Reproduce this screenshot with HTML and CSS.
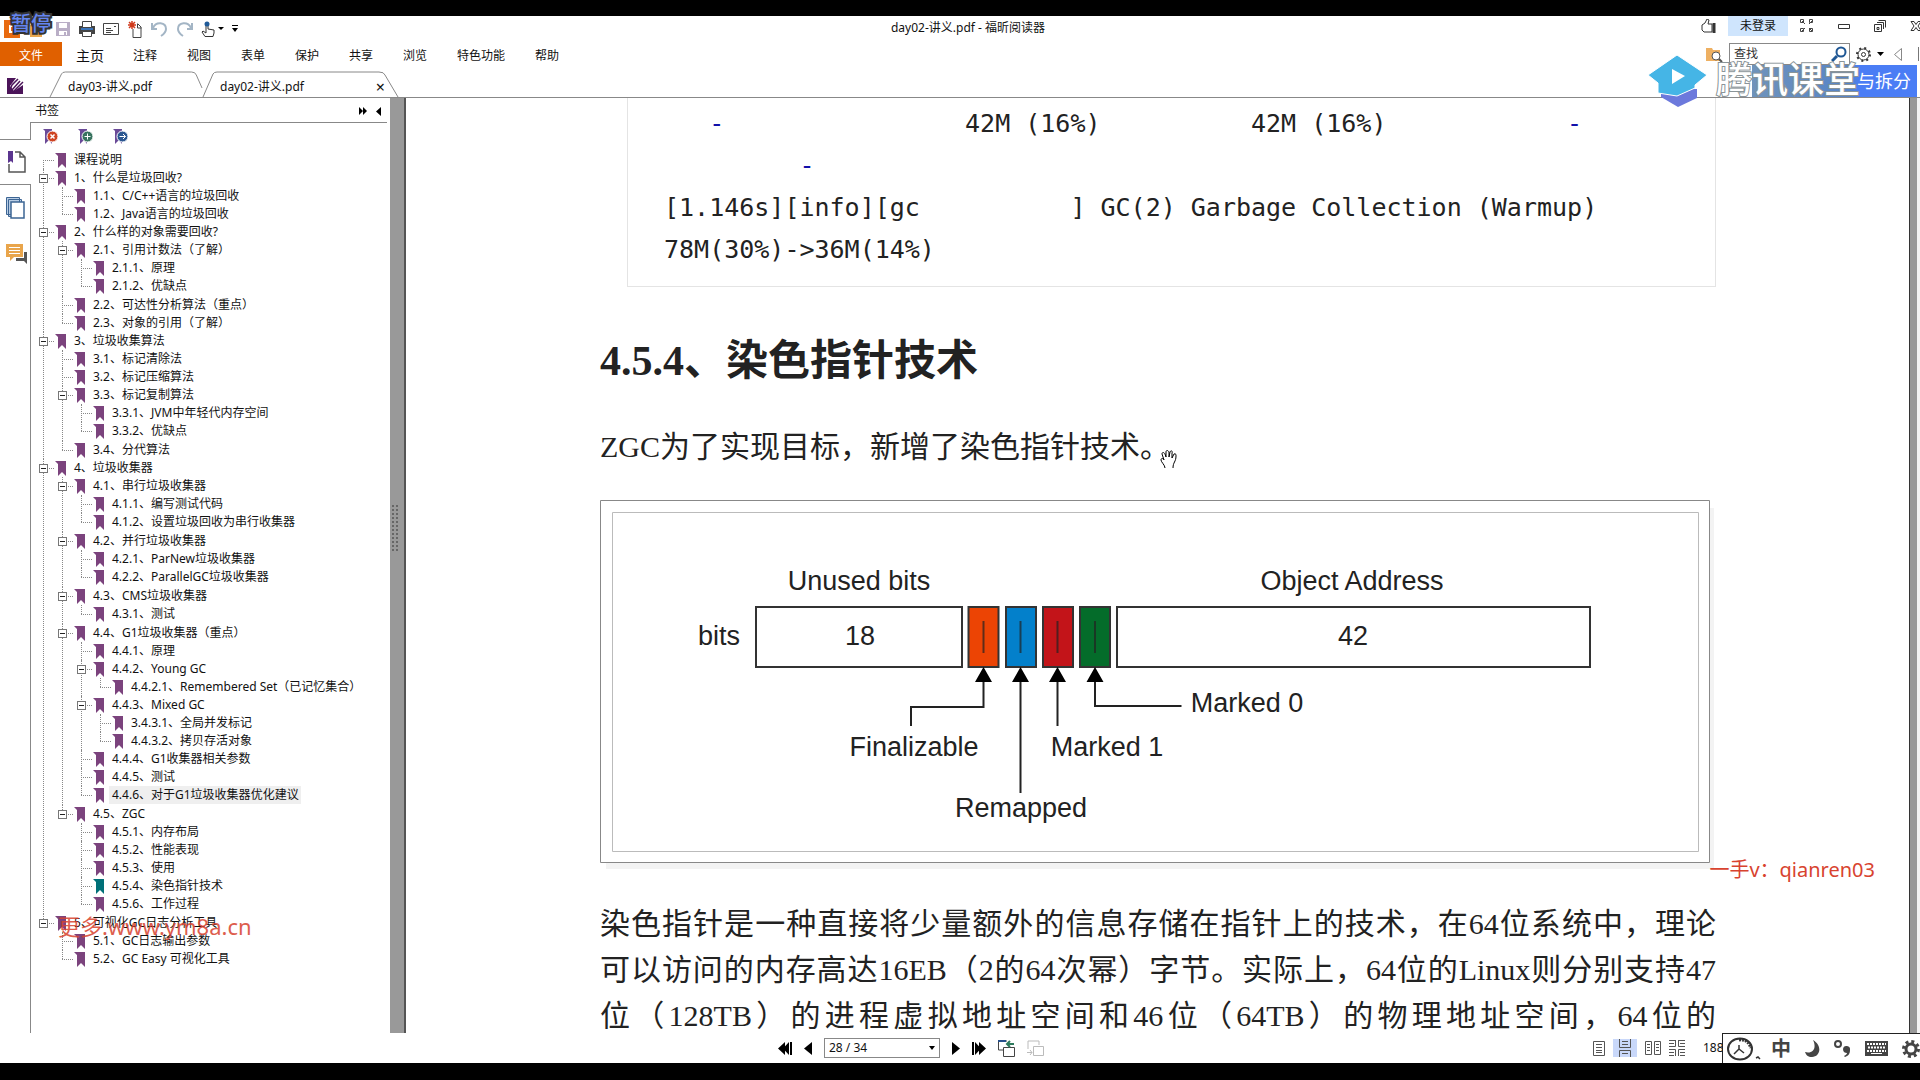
FILE: index.html
```html
<!DOCTYPE html>
<html lang="zh-CN">
<head>
    <meta charset="UTF-8">
    <title>day02-讲义.pdf - 福昕阅读器</title>
    <link rel="stylesheet" href="styles.css">
</head>
<body>
    <svg class="defs" width="0" height="0">
        <symbol id="bm" viewBox="0 0 11 15"><path d="M0 0h11v15l-4-4-4 4V3z"/></symbol>
    </svg>

    <!-- 标题栏 -->
    <header class="titlebar">
        <div class="quick">
            <svg class="logo" width="38" height="18" viewBox="0 0 38 18"><path fill="#e86a10" d="M0 0h16v18H0z"/><path d="M11 6H6v6h5" fill="none" stroke="#fff" stroke-width="2"/><path fill="#e9a850" d="M26 5h12v12H26z"/></svg>
            <svg width="15" height="16" viewBox="0 0 15 16"><path fill="#b9aec6" d="M0 1h14v14H0z"/><path fill="#fff" d="M3 2h8v5H3zM3 10h8v4H3z"/><path fill="#b9aec6" d="M8 11h2v3H8z"/></svg>
            <svg width="16" height="16" viewBox="0 0 16 16"><path fill="#444" d="M0 5h16v8H0z"/><path fill="#fff" stroke="#444" d="M3.500.5h9v6h-9zM3.500 10.500h9v5h-9z"/><path fill="#3a73b8" d="M2 7h12v2H2z"/></svg>
            <svg width="17" height="14" viewBox="0 0 17 14" fill="none" stroke="#444"><path d="M.5 1.500h15v11H.5zM3 6.500h5M3 8.500h7M3 10.500h5M11 4.500h2"/></svg>
            <svg width="15" height="17" viewBox="0 0 15 17" fill="none"><path stroke="#444" d="M5 8v8.500h8V6l-3-3H9M9.500 3v4h4"/><path stroke="#d03a1c" stroke-width="1.500" d="M4 0v8M0 4h8M1 1l6 6M7 1L1 7"/></svg>
            <svg width="17" height="16" viewBox="0 0 17 16" fill="none" stroke="#a3b5c5" stroke-width="2"><path d="M2 7c3-7 13-6 13 1 0 3-2 5-5 7M1 2v6h5"/></svg>
            <svg width="17" height="16" viewBox="0 0 17 16" fill="none" stroke="#a3b5c5" stroke-width="2"><path d="M15 7C12 0 2 1 2 8c0 3 2 5 5 7M16 2v6h-5"/></svg>
            <svg class="point" width="25" height="17" viewBox="0 0 25 17"><path fill="#fff" stroke="#333" d="M4 15.500L1 11l1-1 3 2V2h2v6l6 1v3l-1 3.500z"/><circle cx="6" cy="3" r="2.500" fill="#205a98"/><path d="M17 6h6l-3 3z"/></svg>
            <svg class="more" width="6" height="8" viewBox="0 0 6 8"><path d="M0 0h6v1H0zM0 3h6L3 7z"/></svg>
        </div>
        <div class="title">day02-讲义.pdf - 福昕阅读器</div>
        <div class="account">
            <svg width="15" height="15" viewBox="0 0 15 15" fill="none" stroke="#333"><path d="M1 6l3-2 2-4 2 1-1 4h4v8H3l-2-2z"/><path stroke-width="3" d="M13 4v10"/></svg>
            <button class="login">未登录</button>
            <svg width="14" height="14" viewBox="0 0 14 14" fill="none" stroke="#444"><path d="M.5.5h3v3h-3zM9.500.5h3v3h-3zM.5 9.500h3v3h-3zM9.500 9.500h3v3h-3zM2 2l3 3M12 2L9 5M2 12l3-3M12 12L9 9"/></svg>
            <svg width="12" height="5" viewBox="0 0 12 5" fill="none" stroke="#333"><path d="M.5.5h11v4H.5z"/></svg>
            <svg width="12" height="12" viewBox="0 0 12 12" fill="none" stroke="#333"><path d="M.5 4.500h7v7h-7zM3 2.500h6.500V9M4.500.5h7v7M3 7.500h2v2H3z"/></svg>
            <svg width="12" height="10" viewBox="0 0 12 10" fill="none" stroke="#333"><path d="M1 .5h3l2 3 2-3h3L8 5l3 4.500H8L6 6.500 4 9.500H1L4 5z"/></svg>
        </div>
    </header>

    <!-- 菜单 -->
    <nav class="menu">
        <button class="file">文件</button>
        <button class="home">主页</button>
        <button>注释</button>
        <button>视图</button>
        <button>表单</button>
        <button>保护</button>
        <button>共享</button>
        <button>浏览</button>
        <button>特色功能</button>
        <button>帮助</button>
        <div class="find">
            <svg width="17" height="15" viewBox="0 0 17 15"><path fill="#eeb062" d="M0 1h6l1 2h7v11H0z"/><circle cx="10" cy="9" r="4" fill="#fff" stroke="#555"/><path stroke="#555" stroke-width="2" d="M13 12l3 3"/></svg>
            <label class="findbox">
                <input type="text" placeholder="查找" aria-label="查找">
                <svg width="16" height="16" viewBox="0 0 16 16" fill="none" stroke="#1f5794"><circle cx="10" cy="6" r="4.500" stroke-width="2"/><path stroke-width="3" d="M6 10l-5 5"/></svg>
            </label>
            <svg width="15" height="15" viewBox="0 0 15 15" fill="none" stroke="#333"><circle cx="7.500" cy="7.500" r="5.500"/><circle cx="7.500" cy="7.500" r="2"/><circle cx="7.500" cy="7.500" r="6.500" stroke-width="2" stroke-dasharray="2 3.100"/></svg>
            <svg width="7" height="4" viewBox="0 0 7 4"><path d="M0 0h7L3.500 4z"/></svg>
            <svg class="prev" width="8" height="13" viewBox="0 0 8 13" fill="none" stroke="#888"><path d="M7.500.5v12L.5 6.500z"/></svg>
            <svg width="2" height="14"><path fill="#777" d="M0 0h1v14H0z"/></svg>
        </div>
    </nav>

    <!-- 文档标签 -->
    <div class="tabs">
        <svg class="pen" width="17" height="16" viewBox="0 0 17 16"><path fill="#4b1459" d="M0 0h9L3 8l4 5 9-6v9H0z"/><path fill="none" stroke="#4b1459" stroke-width="1.500" d="M3 12l2-5 6-6M5 12l8-9M7 13l9-9"/></svg>
        <button class="tab">
            <svg viewBox="0 0 160 26" preserveAspectRatio="none"><path d="M0 26L12 3q1-2 4-2h132q4 0 5 3l6 13"/></svg>
            <span>day03-讲义.pdf</span>
        </button>
        <button class="tab wide">
            <svg viewBox="0 0 195 26" preserveAspectRatio="none"><path d="M0 26L10 3q1-2 4-2h162q5 0 6 3l13 22"/></svg>
            <span>day02-讲义.pdf</span>
            <b>×</b>
        </button>
    </div>

    <main class="main">
        <div class="rail">
            <div class="rail-head"></div>
            <div class="rail-gap"></div>
            <div class="rail-on">
                <svg width="18" height="22" viewBox="0 0 18 22"><path fill="none" stroke="#555" stroke-width="1.500" d="M7 1h5l5 5v15H1V13M12 1v5h5"/><path fill="#5b358f" d="M0 0h5v12l-2-2-3 2z"/></svg>
            </div>
            <div class="rail-rest">
                <svg width="19" height="22" viewBox="0 0 19 22" fill="#fff" stroke="#3c6594"><path fill="#b9cde4" d="M.5.500h13v17H.5zM2.500 2.500h13v17h-13z"/><path d="M5 5h13v16H5z" stroke-width="1.500"/></svg>
                <svg width="22" height="21" viewBox="0 0 22 21"><path fill="#e9a54b" d="M0 0h17v13H8l-4 4v-4H0z"/><path stroke="#fff" d="M3 3.500h11M3 6.500h11M3 9.500h11"/><path fill="#555" d="M18 8h3v12l-3-3h-8v-3h8z"/></svg>
            </div>
        </div>

        <aside class="side">
            <div class="side-head">
                <span>书签</span>
                <svg width="24" height="9" viewBox="0 0 24 9"><path d="M0 0l4 4-4 4zM4 0l4 4-4 4zM22 0v9l-5-4.500z"/></svg>
            </div>
            <div class="side-tools">
                <svg width="15" height="16" viewBox="0 0 15 16"><path fill="#6a4a97" d="M0 0h9v15l-3-4-4 4V2z"/><circle cx="9.500" cy="7.500" r="5.500" fill="#cf4422" stroke="#fff"/><path stroke="#fff" stroke-width="1.500" d="M7.500 5.500l4 4M11.500 5.500l-4 4"/></svg>
                <svg width="15" height="16" viewBox="0 0 15 16"><path fill="#6a4a97" d="M0 0h9v15l-3-4-4 4V2z"/><circle cx="9.500" cy="7.500" r="5.500" fill="#38735f" stroke="#fff"/><path stroke="#fff" d="M9.500 4.500v6M6.500 7.500h6"/></svg>
                <svg width="15" height="16" viewBox="0 0 15 16"><path fill="#6a4a97" d="M0 0h9v15l-3-4-4 4V2z"/><circle cx="9.500" cy="7.500" r="5.500" fill="#2b5791" stroke="#fff"/><path stroke="#fff" fill="none" d="M6.500 7.500h6M10 5l2.500 2.500L10 10"/></svg>
            </div>
            <ul class="tree">
                <li><div class="node"><svg><use href="#bm"/></svg><a href="#">课程说明</a></div></li>
                <li><div class="node"><button class="fold"></button><svg><use href="#bm"/></svg><a href="#">1、什么是垃圾回收?</a></div>
                    <ul>
                        <li><div class="node"><svg><use href="#bm"/></svg><a href="#">1.1、C/C++语言的垃圾回收</a></div></li>
                        <li><div class="node"><svg><use href="#bm"/></svg><a href="#">1.2、Java语言的垃圾回收</a></div></li>
                    </ul>
                </li>
                <li><div class="node"><button class="fold"></button><svg><use href="#bm"/></svg><a href="#">2、什么样的对象需要回收?</a></div>
                    <ul>
                        <li><div class="node"><button class="fold"></button><svg><use href="#bm"/></svg><a href="#">2.1、引用计数法（了解）</a></div>
                            <ul>
                                <li><div class="node"><svg><use href="#bm"/></svg><a href="#">2.1.1、原理</a></div></li>
                                <li><div class="node"><svg><use href="#bm"/></svg><a href="#">2.1.2、优缺点</a></div></li>
                            </ul>
                        </li>
                        <li><div class="node"><svg><use href="#bm"/></svg><a href="#">2.2、可达性分析算法（重点）</a></div></li>
                        <li><div class="node"><svg><use href="#bm"/></svg><a href="#">2.3、对象的引用（了解）</a></div></li>
                    </ul>
                </li>
                <li><div class="node"><button class="fold"></button><svg><use href="#bm"/></svg><a href="#">3、垃圾收集算法</a></div>
                    <ul>
                        <li><div class="node"><svg><use href="#bm"/></svg><a href="#">3.1、标记清除法</a></div></li>
                        <li><div class="node"><svg><use href="#bm"/></svg><a href="#">3.2、标记压缩算法</a></div></li>
                        <li><div class="node"><button class="fold"></button><svg><use href="#bm"/></svg><a href="#">3.3、标记复制算法</a></div>
                            <ul>
                                <li><div class="node"><svg><use href="#bm"/></svg><a href="#">3.3.1、JVM中年轻代内存空间</a></div></li>
                                <li><div class="node"><svg><use href="#bm"/></svg><a href="#">3.3.2、优缺点</a></div></li>
                            </ul>
                        </li>
                        <li><div class="node"><svg><use href="#bm"/></svg><a href="#">3.4、分代算法</a></div></li>
                    </ul>
                </li>
                <li><div class="node"><button class="fold"></button><svg><use href="#bm"/></svg><a href="#">4、垃圾收集器</a></div>
                    <ul>
                        <li><div class="node"><button class="fold"></button><svg><use href="#bm"/></svg><a href="#">4.1、串行垃圾收集器</a></div>
                            <ul>
                                <li><div class="node"><svg><use href="#bm"/></svg><a href="#">4.1.1、编写测试代码</a></div></li>
                                <li><div class="node"><svg><use href="#bm"/></svg><a href="#">4.1.2、设置垃圾回收为串行收集器</a></div></li>
                            </ul>
                        </li>
                        <li><div class="node"><button class="fold"></button><svg><use href="#bm"/></svg><a href="#">4.2、并行垃圾收集器</a></div>
                            <ul>
                                <li><div class="node"><svg><use href="#bm"/></svg><a href="#">4.2.1、ParNew垃圾收集器</a></div></li>
                                <li><div class="node"><svg><use href="#bm"/></svg><a href="#">4.2.2、ParallelGC垃圾收集器</a></div></li>
                            </ul>
                        </li>
                        <li><div class="node"><button class="fold"></button><svg><use href="#bm"/></svg><a href="#">4.3、CMS垃圾收集器</a></div>
                            <ul>
                                <li><div class="node"><svg><use href="#bm"/></svg><a href="#">4.3.1、测试</a></div></li>
                            </ul>
                        </li>
                        <li><div class="node"><button class="fold"></button><svg><use href="#bm"/></svg><a href="#">4.4、G1垃圾收集器（重点）</a></div>
                            <ul>
                                <li><div class="node"><svg><use href="#bm"/></svg><a href="#">4.4.1、原理</a></div></li>
                                <li><div class="node"><button class="fold"></button><svg><use href="#bm"/></svg><a href="#">4.4.2、Young GC</a></div>
                                    <ul>
                                        <li><div class="node"><svg><use href="#bm"/></svg><a href="#">4.4.2.1、Remembered Set（已记忆集合）</a></div></li>
                                    </ul>
                                </li>
                                <li><div class="node"><button class="fold"></button><svg><use href="#bm"/></svg><a href="#">4.4.3、Mixed GC</a></div>
                                    <ul>
                                        <li><div class="node"><svg><use href="#bm"/></svg><a href="#">3.4.3.1、全局并发标记</a></div></li>
                                        <li><div class="node"><svg><use href="#bm"/></svg><a href="#">4.4.3.2、拷贝存活对象</a></div></li>
                                    </ul>
                                </li>
                                <li><div class="node"><svg><use href="#bm"/></svg><a href="#">4.4.4、G1收集器相关参数</a></div></li>
                                <li><div class="node"><svg><use href="#bm"/></svg><a href="#">4.4.5、测试</a></div></li>
                                <li><div class="node selected"><svg><use href="#bm"/></svg><a href="#">4.4.6、对于G1垃圾收集器优化建议</a></div></li>
                            </ul>
                        </li>
                        <li><div class="node"><button class="fold"></button><svg><use href="#bm"/></svg><a href="#">4.5、ZGC</a></div>
                            <ul>
                                <li><div class="node"><svg><use href="#bm"/></svg><a href="#">4.5.1、内存布局</a></div></li>
                                <li><div class="node"><svg><use href="#bm"/></svg><a href="#">4.5.2、性能表现</a></div></li>
                                <li><div class="node"><svg><use href="#bm"/></svg><a href="#">4.5.3、使用</a></div></li>
                                <li><div class="node current"><svg><use href="#bm"/></svg><a href="#">4.5.4、染色指针技术</a></div></li>
                                <li><div class="node"><svg><use href="#bm"/></svg><a href="#">4.5.6、工作过程</a></div></li>
                            </ul>
                        </li>
                    </ul>
                </li>
                <li><div class="node"><button class="fold"></button><svg><use href="#bm"/></svg><a href="#">5、可视化GC日志分析工具</a></div>
                    <ul>
                        <li><div class="node"><svg><use href="#bm"/></svg><a href="#">5.1、GC日志输出参数</a></div></li>
                        <li><div class="node"><svg><use href="#bm"/></svg><a href="#">5.2、GC Easy 可视化工具</a></div></li>
                    </ul>
                </li>
            </ul>
            <div class="mark mark-side">更多.www.ym8a.cn</div>
        </aside>
        <div class="splitter"><i></i></div>

        <article class="doc">
<pre class="code">   <em>-</em>                42M (16%)          42M (16%)            <em>-</em>
         <em>-</em>
[1.146s][info][gc          ] GC(2) Garbage Collection (Warmup)
78M(30%)-&gt;36M(14%)</pre>
            <h2>4.5.4、染色指针技术</h2>
            <p class="lead">ZGC为了实现目标，新增了染色指针技术。<svg class="hand" width="17" height="19" viewBox="0 0 17 19"><path fill="#fff" stroke="#000" d="M5 18c0-3-4-6-4-8s2-2 3 0L2 4c0-2 2-2 3 0l1 3V2c0-2 2-2 3 0v5l1-5c1-2 3-1 2 1v5l2-4c2-1 2 1 2 2 0 6-3 6-3 12"/></svg></p>
            <figure>
                <svg viewBox="0 0 1110 363">
                    <path class="frame outer" d="M.5.5h1109v362H.5z"/>
                    <path class="frame" d="M12.500 12.500h1086v339h-1086z"/>
                    <g class="cells">
                        <path d="M156 107h206v60H156zM517 107h473v60H517z"/>
                        <path fill="#ec4404" d="M368.500 107h30v60h-30z"/>
                        <path fill="#0380cb" d="M406 107h30v60h-30z"/>
                        <path fill="#c31419" d="M443 107h30v60h-30z"/>
                        <path fill="#046c2a" d="M480 107h30v60h-30z"/>
                    </g>
                    <path class="line thin" d="M383.500 121v32M420.500 121v32M457.500 121v32M495 121v32"/>
                    <path class="line" d="M383.500 180v27h-72.500v19M420.500 180v113M457.500 180v46M495 180v26h86.500"/>
                    <path d="M383.500 167l8.500 15h-17zM420.500 167l8.500 15h-17zM457.500 167l8.500 15h-17zM495 167l8.500 15h-17z"/>
                    <g class="labels">
                        <text x="259" y="90">Unused bits</text>
                        <text x="752" y="90">Object Address</text>
                        <text x="119" y="145">bits</text>
                        <text x="260" y="145">18</text>
                        <text x="753" y="145">42</text>
                        <text x="647" y="212">Marked 0</text>
                        <text x="314" y="256">Finalizable</text>
                        <text x="507" y="256">Marked 1</text>
                        <text x="421" y="317">Remapped</text>
                    </g>
                </svg>
            </figure>
            <p class="body">染色指针是一种直接将少量额外的信息存储在指针上的技术，在64位系统中，理论<br>可以访问的内存高达16EB（2的64次幂）字节。实际上，64位的Linux则分别支持47<br>位（128TB）的进程虚拟地址空间和46位（64TB）的物理地址空间，64位的</p>
            <div class="mark mark-doc">一手v：qianren03</div>
        </article>
        <div class="scroll"></div>
    </main>

    <!-- 状态栏 -->
    <footer class="status">
        <div class="pager">
            <svg width="14" height="13" viewBox="0 0 14 13"><path d="M7 0v13L0 6.500zM11 0v13L5 6.500zM12 0h2v13h-2z"/></svg>
            <svg width="8" height="13" viewBox="0 0 8 13"><path d="M8 0v13L0 6.500z"/></svg>
            <div class="pagebox">
                <select aria-label="页码"><option>28 / 34</option></select>
                <svg width="6" height="4" viewBox="0 0 6 4"><path d="M0 0h6L3 4z"/></svg>
            </div>
            <svg width="8" height="13" viewBox="0 0 8 13"><path d="M0 0l8 6.500L0 13z"/></svg>
            <svg width="14" height="13" viewBox="0 0 14 13"><path d="M0 0h2v13H0zM3 0l6 6.500L3 13zM7 0l7 6.500L7 13z"/></svg>
            <svg width="17" height="17" viewBox="0 0 17 17" fill="none" stroke="#444"><path d="M5 10H.5V1H9M5.500 7.500h11v9h-11z"/><path stroke="#27508c" stroke-width="2" d="M0 1h8"/><path stroke="#2d7a5c" stroke-width="2" d="M9 4h7M12 1L9 4l3 3"/></svg>
            <svg width="17" height="17" viewBox="0 0 17 17" fill="none" stroke="#bbb"><path d="M1 9V1h11v4M6.500 6.500h10v9h-10zM0 12.500h5M3 10l2 2.500L3 15"/></svg>
        </div>
        <div class="views">
            <svg width="12" height="15" viewBox="0 0 12 15"><path d="M.5.5h11v14H.5zM3 3.500h6M3 6.500h6M3 9.500h6M3 11.500h6"/></svg>
            <svg class="on" width="24" height="18" viewBox="0 0 24 18"><path d="M6.500 0v8.500h11V0M6.500 18v-6.500h11V18M9 2.500h6M9 5.500h6M9 14.500h6"/></svg>
            <svg width="16" height="15" viewBox="0 0 16 15"><path d="M.5.5h6v13h-6zM9.500.5h6v13h-6zM2 3.500h3M2 6.500h3M2 9.500h3M11 3.500h3M11 6.500h3M11 9.500h3"/></svg>
            <svg width="16" height="16" viewBox="0 0 16 16"><path d="M0 .5h6M0 3.500h5M0 6.500h6.500V0M16 6.500H9.500V0M10 .5h6M11 3.500h5M0 9.500h6.500V16M16 9.500H9.500V16M0 12.500h5M11 12.500h5M0 15.500h5M11 15.500h5"/></svg>
            <span>188</span>
        </div>
        <div class="ime">
            <svg width="34" height="24" viewBox="0 0 34 24" fill="none" stroke="#333"><ellipse cx="13" cy="12" rx="12" ry="10.500" stroke-width="2"/><path stroke-width="3" d="M12 3c7-1 10 3 12 8" stroke-dasharray="2 1"/><path stroke-width="1.500" d="M12 8v4l-5 5M12 12l5 4M29 21l2-1 2 2"/></svg>
            <b>中</b>
            <svg width="15" height="17" viewBox="0 0 15 17" fill="#444"><path d="M8 0c10 6 7 17-1 17-4 0-6-2-7-5 8 2 12-4 8-12z"/></svg>
            <svg width="17" height="17" viewBox="0 0 17 17"><circle cx="4" cy="4" r="3" fill="none" stroke="#444" stroke-width="2"/><path fill="#444" d="M9 9a3.500 3.500 0 1 1 7 1c0 4-2 6-5 7l-1-1c2-1 3-2 3-3-2 0-4-1-4-4z"/></svg>
            <svg width="23" height="15" viewBox="0 0 23 15"><path fill="#444" d="M0 0h23v15H0z"/><path stroke="#fff" stroke-width="2" stroke-dasharray="2 1" d="M2 3h19M3 6.500h18M2 10h19"/><path stroke="#fff" stroke-width="1" d="M6 12.500h11"/></svg>
            <svg width="18" height="18" viewBox="0 0 18 18" fill="none" stroke="#444"><circle cx="9" cy="9" r="5" stroke-width="3"/><circle cx="9" cy="9" r="7.500" stroke-width="3" stroke-dasharray="3 2.900"/></svg>
        </div>
    </footer>

    <!-- 视频水印 -->
    <div class="pause">暂停</div>
    <div class="ribbon">与拆分</div>
    <div class="brand">
        <svg width="59" height="52" viewBox="0 0 59 52"><path fill="#6c79dc" d="M13 34h36v9L30 52 13 42z"/><path fill="#45b5e6" stroke="#fff" d="M29 0l30 20-12 10v3L29 41 10 38V28L0 20z"/><path fill="#fff" d="M24 14l13 7-13 8z"/></svg>
        <span>腾讯课堂</span>
    </div>
</body>
</html>
```
FILE: styles.css
```css
*{
    box-sizing:border-box;
}
body{
    margin:0;
    height:100vh;
    padding:16px 0 17px;
    display:flex;
    flex-direction:column;
    position:relative;
    overflow:hidden;
    background:#000;
    color:#111;
    font:12px/18px "Noto Sans","Noto Sans CJK SC",sans-serif;
}
button,input,select{
    font:inherit;
    color:inherit;
    border:0;
    padding:0;
    background:none;
}
svg{
    flex:none;
}
.defs{
    position:absolute;
}
/* 标题栏 */
.titlebar{
    height:26px;
    display:grid;
    grid-template-columns:1fr auto 1fr;
    background:#fff;
}
.quick,.account{
    display:flex;
    align-items:center;
}
.quick{
    gap:8px;
    padding-left:4px;
}
.quick .logo{
    margin-right:6px;
}
.quick .more{
    margin-left:-2px;
}
.title{
    margin-left:16px;
    line-height:24px;
}
.account{
    justify-content:flex-end;
    gap:24px;
    margin-right:-2px;
    padding-bottom:6px;
}
.login{
    height:20px;
    padding:0 12px;
    margin:0 -12px;
    background:#cfe5fd;
}
/* 菜单 */
.menu{
    height:24px;
    display:flex;
    align-items:center;
    gap:30px;
    background:#fff;
}
.menu button{
    padding-top:4px;
}
.menu .file{
    width:62px;
    height:24px;
    margin-right:-16px;
    background:#e06000;
    color:#fff;
}
.menu .home{
    margin-right:-1px;
    font-size:14px;
}
.find{
    display:flex;
    align-items:center;
    gap:6px;
    margin-left:auto;
}
.findbox{
    width:121px;
    height:22px;
    display:flex;
    align-items:center;
    padding:0 2px 0 4px;
    border:1px solid #888;
}
.findbox input{
    flex:1;
    min-width:0;
    outline:none;
}
.findbox input::placeholder{
    color:#333;
    opacity:1;
}
.find .prev{
    margin:0 10px 0 4px;
}
/* 文档标签 */
.tabs{
    height:32px;
    display:flex;
    align-items:flex-end;
    padding-left:7px;
    background:#fff;
    border-bottom:1px solid #888;
}
.pen{
    margin:0 26px 3px 0;
}
.tab{
    position:relative;
    width:153px;
    height:26px;
    padding:6px 13px 0 18px;
    display:flex;
    align-items:center;
    justify-content:space-between;
    font-size:12px;
}
.tab.wide{
    width:195px;
    padding-left:17px;
}
.tab svg{
    position:absolute;
    left:0;
    top:0;
    width:100%;
    height:26px;
    fill:none;
    stroke:#888;
    overflow:visible;
}
.tab b{
    font-size:16px;
    font-weight:400;
}
/* 主体 */
.main{
    flex:1;
    min-height:0;
    display:flex;
    background:#fff;
}
.rail{
    width:31px;
    display:flex;
    flex-direction:column;
}
.rail-head{
    height:24px;
}
.rail-gap{
    height:18px;
    border:solid #888;
    border-width:0 1px 1px 0;
}
.rail-on{
    height:44px;
    padding:11px 0 0 8px;
}
.rail-rest{
    flex:1;
    display:flex;
    flex-direction:column;
    gap:25px;
    padding:12px 0 0 6px;
    border:solid #888;
    border-width:1px 1px 0 0;
}
.side{
    position:relative;
    width:359px;
    padding-right:3px;
}
.side-head{
    height:25px;
    display:flex;
    align-items:center;
    justify-content:space-between;
    padding:2px 4px 0;
    border-bottom:1px solid #888;
}
.side-tools{
    height:28px;
    display:flex;
    align-items:center;
    gap:20px;
    padding:0 12px;
}
.tree,.tree ul{
    margin:0;
    padding:0;
    list-style:none;
}
.tree ul{
    padding-left:19px;
}
.tree ul ul{
    padding-bottom:1px;
}
.tree ul ul ul{
    padding-bottom:0;
}
.tree li{
    position:relative;
}
/* 虚线 */
.tree li::before{
    content:"";
    position:absolute;
    left:12px;
    top:0;
    bottom:0;
    border-left:1px dotted #888;
}
.tree > li:first-child::before{
    top:9px;
}
.tree li:last-child::before{
    bottom:auto;
    height:9px;
}
.node{
    position:relative;
    height:18px;
    display:flex;
    align-items:center;
    padding-left:8px;
}
.node::before{
    content:"";
    position:absolute;
    left:12px;
    top:9px;
    width:11px;
    border-top:1px dotted #888;
}
.fold{
    position:relative;
    width:9px;
    height:9px;
    border:1px solid #777;
    background:linear-gradient(#222,#222) center/5px 1px no-repeat #fff;
}
.node svg{
    width:11px;
    height:15px;
    margin:0 5px 0 7px;
    fill:#7b437d;
}
.node svg:first-child{
    margin-left:16px;
}
.node a{
    padding:0 2px 0 3px;
    color:#111;
    text-decoration:none;
    white-space:nowrap;
}
.node.selected a{
    background:#efefef;
}
.node.current svg{
    fill:#007078;
}
.splitter{
    width:16px;
    display:flex;
    align-items:center;
    background:#999;
    border-right:2px solid #555;
}
.splitter i{
    width:6px;
    height:46px;
    margin:0 0 76px 2px;
    border:dotted #666;
    border-width:0 2px;
}
/* 文档 */
.doc{
    flex:1;
    min-width:0;
    position:relative;
    overflow:hidden;
    padding:0 193px 0 194px;
    color:#222;
}
.code{
    margin:0 0 0 27px;
    padding:5px 0 15px 36px;
    border:solid #e4e4e4;
    border-width:0 1px 1px;
    font:25px/42px "DejaVu Sans Mono",monospace;
}
.code em{
    color:#11a;
    font-style:normal;
}
.doc h2{
    margin:44px 0 33px;
    font:bold 42px/60px "Liberation Serif","Noto Sans CJK SC",serif;
}
.doc p{
    margin:0;
    font:30px/46px "Liberation Serif","Noto Sans CJK SC",serif;
}
.hand{
    margin-left:-10px;
    vertical-align:-12px;
}
.doc .body{
    text-align:justify;
    text-align-last:justify;
    white-space:nowrap;
}
figure{
    margin:30px 6px 38px 0;
    box-shadow:5px 7px 0 -1px #f3f3f3;
}
.doc .lead{
    height:46px;
}
figure svg{
    display:block;
    width:100%;
}
.frame{
    fill:none;
    stroke:#bbb;
}
.frame.outer{
    fill:#fff;
    stroke:#888;
}
.cells{
    fill:#fff;
    stroke:#333;
    stroke-width:2px;
}
.line{
    fill:none;
    stroke:#222;
    stroke-width:2px;
}
.line.thin{
    stroke-opacity:.7;
}
.labels{
    fill:#222;
    font:27px "Liberation Sans",sans-serif;
    text-anchor:middle;
}
.scroll{
    width:11px;
    background:#999;
    border-left:1px solid #333;
    border-right:3px solid #f4f4f4;
}
/* 状态栏 */
.status{
    height:30px;
    display:flex;
    justify-content:space-between;
    background:#fff;
    position:relative;
}
.pager{
    display:flex;
    align-items:center;
    gap:12px;
    padding-left:778px;
}
.pagebox{
    position:relative;
    width:116px;
    height:20px;
}
.pagebox select{
    width:100%;
    height:100%;
    padding:0 4px;
    border:1px solid #888;
    appearance:none;
}
.pagebox svg{
    position:absolute;
    right:5px;
    top:8px;
}
.views{
    display:flex;
    align-items:center;
    gap:8px;
    margin-left:auto;
    fill:none;
    stroke:#555;
}
.views .on{
    background:#c9d8fa;
}
.views span{
    width:19px;
    margin-left:10px;
    overflow:hidden;
}
.ime{
    width:198px;
    display:flex;
    align-items:center;
    gap:14px;
    padding-left:4px;
    overflow:hidden;
    border:solid #222;
    border-width:1px 0 0 1px;
}
.ime b{
    margin-left:-4px;
    font-size:20px;
    color:#444;
}
/* 水印 */
.mark{
    position:absolute;
    color:#d8432f;
    white-space:nowrap;
}
.mark-side{
    left:27px;
    top:812px;
    font-size:22px;
    line-height:32px;
    opacity:.85;
}
.mark-doc{
    right:34px;
    top:758px;
    font-size:20px;
    line-height:28px;
}
.pause{
    position:absolute;
    left:11px;
    top:12px;
    font-size:20px;
    line-height:24px;
    font-weight:500;
    color:#6485f0;
    -webkit-text-stroke:4px #333;
    paint-order:stroke fill;
}
.ribbon{
    position:absolute;
    right:3px;
    top:65px;
    width:165px;
    height:32px;
    padding-right:6px;
    background:linear-gradient(90deg,#6f93bb,#5684c8 60%,#4a7df5 65%);
    color:#fff;
    font-size:18px;
    line-height:32px;
    text-align:right;
}
.brand{
    position:absolute;
    right:60px;
    top:55px;
    display:flex;
    gap:9px;
}
.brand span{
    font-size:36px;
    line-height:50px;
    font-weight:500;
    color:#fff;
    -webkit-text-stroke:2px #8a9498;
    paint-order:stroke fill;
}
```
